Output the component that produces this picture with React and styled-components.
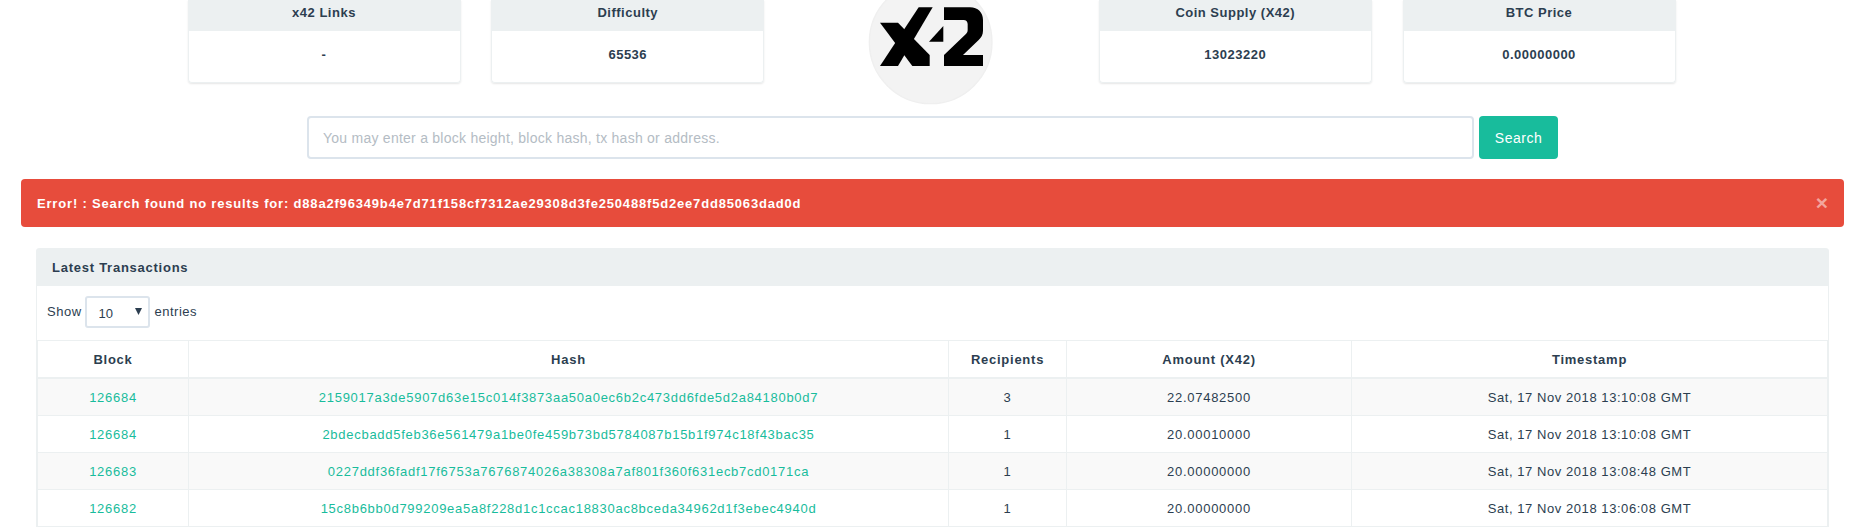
import styled, { createGlobalStyle } from "styled-components";

const stats = [
  ["x42 Links", "-"],
  ["Difficulty", "65536"],
  null,
  ["Coin Supply (X42)", "13023220"],
  ["BTC Price", "0.00000000"],
];

const rows = [
  ["126684", "2159017a3de5907d63e15c014f3873aa50a0ec6b2c473dd6fde5d2a84180b0d7", "3", "22.07482500", "Sat, 17 Nov 2018 13:10:08 GMT"],
  ["126684", "2bdecbadd5feb36e561479a1be0fe459b73bd5784087b15b1f974c18f43bac35", "1", "20.00010000", "Sat, 17 Nov 2018 13:10:08 GMT"],
  ["126683", "0227ddf36fadf17f6753a7676874026a38308a7af801f360f631ecb7cd0171ca", "1", "20.00000000", "Sat, 17 Nov 2018 13:08:48 GMT"],
  ["126682", "15c8b6bb0d799209ea5a8f228d1c1ccac18830ac8bceda34962d1f3ebec4940d", "1", "20.00000000", "Sat, 17 Nov 2018 13:06:08 GMT"],
];

function Logo() {
  return (
    <LogoSvg viewBox="0 -60 405 375">
      <circle cx="200" cy="127" r="184" fill="#f3f3f3" stroke="#efefef" strokeWidth="4" />
      <g fill="#000">
        <polygon points="48,198 102,198 206,22 164,22" />
        <polygon points="48,68 102,68 197,165 197,198 145,198" />
        <polygon points="195,125 238,78 238,125" />
        <path d="M240 22H318C342 22 357 38 357 60V92C357 104 352 112 344 120L297 165H357V198H240V165L305 103C309 99 311 95 311 90V72C311 65 306 60 299 60H240Z" />
      </g>
    </LogoSvg>
  );
}

function App() {
  return (
    <Page>
      <GlobalStyle />
      <StatRow>
        {stats.map((stat, i) =>
          stat ? (
            <StatCard key={stat[0]}>
              <StatHead>{stat[0]}</StatHead>
              <StatBody>{stat[1]}</StatBody>
            </StatCard>
          ) : (
            <LogoCell key={i}>
              <Logo />
            </LogoCell>
          )
        )}
      </StatRow>

      <SearchRow>
        <SearchInput placeholder="You may enter a block height, block hash, tx hash or address." />
        <SearchButton>Search</SearchButton>
      </SearchRow>

      <Alert>
        <span>Error! : Search found no results for: d88a2f96349b4e7d71f158cf7312ae29308d3fe250488f5d2ee7dd85063dad0d</span>
        <Close>×</Close>
      </Alert>

      <Panel>
        <PanelHead>Latest Transactions</PanelHead>
        <LengthRow>
          Show
          <LengthSelect defaultValue="10">
            <option value="10">10</option>
            <option value="25">25</option>
          </LengthSelect>
          entries
        </LengthRow>
        <Table>
          <colgroup>
            <col width="151" />
            <col width="760" />
            <col width="118" />
            <col width="285" />
            <col />
          </colgroup>
          <thead>
            <tr>
              <Th>Block</Th>
              <Th>Hash</Th>
              <Th>Recipients</Th>
              <Th>Amount (X42)</Th>
              <Th>Timestamp</Th>
            </tr>
          </thead>
          <tbody>
            {rows.map((row) => (
              <Tr key={row[1]}>
                <Td><TxLink>{row[0]}</TxLink></Td>
                <Td><TxLink>{row[1]}</TxLink></Td>
                <Td>{row[2]}</Td>
                <Td>{row[3]}</Td>
                <TimeCell>{row[4]}</TimeCell>
              </Tr>
            ))}
          </tbody>
        </Table>
      </Panel>
    </Page>
  );
}

export default App;

// --- Styled Components ---

const GlobalStyle = createGlobalStyle`
  html, body {
    margin: 0;
    background: #fff;
    overflow: hidden;
  }
  body {
    font-family: "Liberation Sans", Arial, sans-serif;
    font-size: 13px;
    letter-spacing: 0.5px;
    color: #2c3e50;
  }
`;

const Page = styled.div`
  width: 1862px;
  height: 527px;
  overflow: hidden;
`;

const StatRow = styled.div`
  display: flex;
  justify-content: center;
  gap: 30.75px;
  padding-left: 1px;
`;

const StatCard = styled.div`
  width: 273px;
  height: 83px;
  box-sizing: border-box;
  border-radius: 0 0 4px 4px;
  box-shadow: 0 1px 2px rgba(0, 0, 0, 0.1);
  border: 1px solid #ecf0f1;
  border-top: 0;
  text-align: center;
  font-weight: bold;
`;

const StatHead = styled.div`
  height: 31px;
  line-height: 25px;
  background: #ecf0f1;
  margin: 0 -1px;
`;

const StatBody = styled.div`
  line-height: 47px;
`;

const LogoCell = styled.div`
  width: 273px;
  height: 83px;
  display: flex;
  justify-content: center;
`;

const LogoSvg = styled.svg`
  width: 135px;
  height: 125px;
  margin-top: -20px;
  flex: none;
  filter: blur(0.4px);
`;

const SearchRow = styled.div`
  display: flex;
  gap: 5px;
  margin: 33px 0 0 307px;
`;

const SearchInput = styled.input`
  width: 1167px;
  height: 43px;
  box-sizing: border-box;
  padding: 0 14px;
  border: 2px solid #dce4ec;
  border-radius: 4px;
  outline: none;
  font-family: inherit;
  font-size: 14px;
  letter-spacing: 0.25px;
  color: #2c3e50;
  &::placeholder {
    color: #b4bcc4;
  }
`;

const SearchButton = styled.button`
  width: 79px;
  height: 43px;
  border: 0;
  border-radius: 4px;
  background: #18bc9c;
  color: #fff;
  font-family: inherit;
  font-size: 14px;
  letter-spacing: 0.5px;
`;

const Alert = styled.div`
  display: flex;
  justify-content: space-between;
  align-items: center;
  height: 48px;
  box-sizing: border-box;
  margin: 20px 18px 0 21px;
  padding: 0 16px 0 16px;
  border-radius: 4px;
  background: #e74c3c;
  color: #fff;
  font-weight: bold;
  letter-spacing: 0.82px;
`;

const Close = styled.span`
  font-size: 21px;
  letter-spacing: 0;
  color: #f3a59d;
`;

const Panel = styled.div`
  margin: 21px 33px 0 36px;
  border: 1px solid #ecf0f1;
  border-top: 0;
  border-radius: 4px 4px 0 0;
`;

const PanelHead = styled.div`
  height: 38px;
  line-height: 39px;
  margin: 0 -1px;
  padding-left: 16px;
  background: #ecf0f1;
  border-radius: 4px 4px 0 0;
  font-weight: bold;
  letter-spacing: 0.75px;
`;

const LengthRow = styled.div`
  display: flex;
  align-items: center;
  gap: 4px;
  height: 54px;
  padding: 0 0 3px 10px;
  box-sizing: border-box;
`;

const LengthSelect = styled.select`
  appearance: none;
  width: 65px;
  height: 32px;
  margin: 0 1px 0 -1px;
  padding: 4px 0 0 12px;
  background: #fff url("data:image/svg+xml,%3Csvg xmlns='http://www.w3.org/2000/svg' width='7' height='7'%3E%3Cpolygon points='0,0 7,0 3.5,7' fill='%232c3e50'/%3E%3C/svg%3E") no-repeat 48px 10px;
  border: 2px solid #dce4ec;
  border-radius: 3px;
  outline: none;
  font-family: inherit;
  font-size: 13px;
  color: #2c3e50;
`;

const Table = styled.table`
  width: 100%;
  table-layout: fixed;
  border-collapse: collapse;
  text-align: center;
`;

const Th = styled.th`
  height: 36px;
  padding: 0;
  border: 1px solid #ecf0f1;
  border-bottom-width: 2px;
  letter-spacing: 0.75px;
`;

const Tr = styled.tr`
  &:nth-child(odd) {
    background: #f9f9f9;
  }
`;

const Td = styled.td`
  height: 36px;
  padding: 0;
  border: 1px solid #ecf0f1;
  letter-spacing: 0.72px;
`;

const TimeCell = styled(Td)`
  letter-spacing: 0.56px;
`;

const TxLink = styled.span`
  color: #18bc9c;
`;
